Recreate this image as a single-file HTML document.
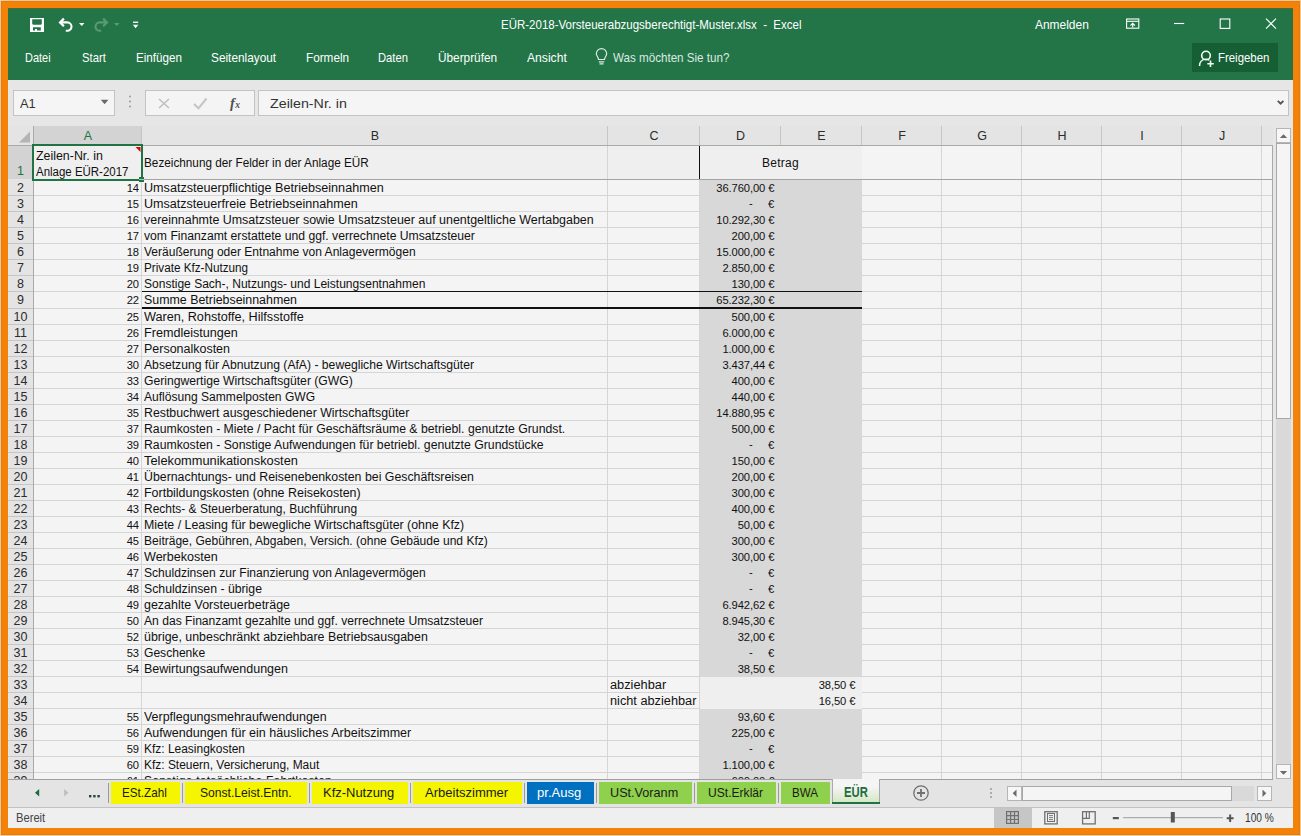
<!DOCTYPE html><html><head><meta charset="utf-8"><style>
*{margin:0;padding:0;box-sizing:border-box}
html,body{width:1301px;height:836px;overflow:hidden;background:#f58208;font-family:"Liberation Sans",sans-serif;position:relative}
.a{position:absolute}
.t{position:absolute;white-space:pre;line-height:1}
svg{position:absolute;overflow:visible}
</style></head><body><div class="a" style="left:0px;top:0px;width:1301px;height:836px;background:#fbc98e;"></div>
<div class="a" style="left:1px;top:1px;width:1299px;height:834px;background:#f58208;border:1px solid #de7c18"></div>
<div class="a" style="left:8px;top:8px;width:1285px;height:820px;background:#e6e6e6;"></div>
<div class="a" style="left:8px;top:8px;width:1285px;height:72px;background:#237548;"></div>
<div class="a" style="left:8px;top:8px;width:1285px;height:1px;background:#4d6b34;"></div>
<div class="t" style="left:500.50px;top:18.30px;font-size:13px;color:#ffffff;font-weight:normal;transform:scaleX(0.8849);transform-origin:0 0;">EÜR-2018-Vorsteuerabzugsberechtigt-Muster.xlsx  -  Excel</div>
<div class="t" style="left:1035.30px;top:17.50px;font-size:13px;color:#ffffff;font-weight:normal;transform:scaleX(0.9189);transform-origin:0 0;">Anmelden</div>
<div class="t" style="left:24.90px;top:51.20px;font-size:13px;color:#ffffff;font-weight:normal;transform:scaleX(0.8432);transform-origin:0 0;">Datei</div>
<div class="t" style="left:82.00px;top:51.20px;font-size:13px;color:#ffffff;font-weight:normal;transform:scaleX(0.8664);transform-origin:0 0;">Start</div>
<div class="t" style="left:135.50px;top:51.20px;font-size:13px;color:#ffffff;font-weight:normal;transform:scaleX(0.8962);transform-origin:0 0;">Einfügen</div>
<div class="t" style="left:211.00px;top:51.20px;font-size:13px;color:#ffffff;font-weight:normal;transform:scaleX(0.9097);transform-origin:0 0;">Seitenlayout</div>
<div class="t" style="left:305.70px;top:51.20px;font-size:13px;color:#ffffff;font-weight:normal;transform:scaleX(0.9038);transform-origin:0 0;">Formeln</div>
<div class="t" style="left:378.40px;top:51.20px;font-size:13px;color:#ffffff;font-weight:normal;transform:scaleX(0.8616);transform-origin:0 0;">Daten</div>
<div class="t" style="left:438.40px;top:51.20px;font-size:13px;color:#ffffff;font-weight:normal;transform:scaleX(0.9086);transform-origin:0 0;">Überprüfen</div>
<div class="t" style="left:527.00px;top:51.20px;font-size:13px;color:#ffffff;font-weight:normal;transform:scaleX(0.9334);transform-origin:0 0;">Ansicht</div>
<div class="t" style="left:613.00px;top:51.20px;font-size:13px;color:#dde9e1;font-weight:normal;transform:scaleX(0.8932);transform-origin:0 0;">Was möchten Sie tun?</div>
<svg style="left:0;top:0" width="1301" height="100"><g fill="none" stroke="#dde9e1" stroke-width="1.2"><path d="M598.5 59.5 C598.5 57 596.3 56 596.3 53.8 A5.2 5.2 0 0 1 606.7 53.8 C606.7 56 604.5 57 604.5 59.5 Z"/><path d="M598.8 61.8 H604.2 M599.5 63.8 H603.5"/></g></svg>
<div class="a" style="left:1192px;top:43px;width:86px;height:29px;background:#165f34;"></div>
<div class="t" style="left:1218.30px;top:51.20px;font-size:13px;color:#ffffff;font-weight:normal;transform:scaleX(0.8779);transform-origin:0 0;">Freigeben</div>
<svg style="left:0;top:0" width="1301" height="100"><g fill="none" stroke="#f2fff5" stroke-width="1.6"><circle cx="1206" cy="55.5" r="4.3"/><path d="M1199.5 66 C1199.5 61.5 1202.5 59.3 1206 59.3 C1207.3 59.3 1208.3 59.6 1209.3 60.1"/><path d="M1210.5 60.5 V67 M1207.3 63.7 H1213.8"/></g></svg>
<svg style="left:0;top:0" width="1301" height="100"><rect x="30" y="18" width="14" height="14" fill="#fff"/><path d="M32.2 19.2 H41.8 V24 L40.8 24.8 H33.2 L32.2 24 Z" fill="#237548"/><path d="M33 27.2 H40.8 V30.6 H37 V29 H35 V30.6 H33 Z" fill="#237548"/><path d="M61 22.4 H67.3 A4.2 4.2 0 0 1 67.3 30.8 H65.8" fill="none" stroke="#fff" stroke-width="2.1"/><path d="M63.9 18.6 L60.1 22.4 L63.9 26.2" fill="none" stroke="#fff" stroke-width="2.3"/><path d="M79 23 H84.5 L81.75 26 Z" fill="#fff"/><path d="M106 22.4 H99.7 A4.2 4.2 0 0 0 99.7 30.8 H101.2" fill="none" stroke="#5a9a72" stroke-width="2.1"/><path d="M103.1 18.6 L106.9 22.4 L103.1 26.2" fill="none" stroke="#5a9a72" stroke-width="2.3"/><path d="M114 23 H119.5 L116.75 26 Z" fill="#5d9a74"/><rect x="133" y="21.6" width="5.2" height="1.3" fill="#fff"/><path d="M132.8 24.8 H138.4 L135.6 28.3 Z" fill="#fff"/><rect x="1126.6" y="19" width="12.2" height="9.2" fill="none" stroke="#fff" stroke-width="1.1"/><path d="M1126.6 21.3 H1138.8" stroke="#fff" stroke-width="1.1"/><path d="M1132.7 27.5 V23.5 M1130.5 25.5 L1132.7 23.3 L1134.9 25.5" fill="none" stroke="#fff" stroke-width="1.1"/><path d="M1174 23.5 H1184.2" stroke="#fff" stroke-width="1.1"/><rect x="1220.2" y="19" width="9.6" height="9.4" fill="none" stroke="#fff" stroke-width="1.1"/><path d="M1266 18.6 L1276 28.6 M1276 18.6 L1266 28.6" stroke="#fff" stroke-width="1.1"/></svg>
<div class="a" style="left:8px;top:80px;width:1285px;height:46px;background:#e6e6e6;"></div>
<div class="a" style="left:13px;top:90px;width:102px;height:26px;background:#f5f5f5;border:1px solid #c3c3c3"></div>
<div class="t" style="left:20.10px;top:97.00px;font-size:13px;color:#333;font-weight:normal;transform:scaleX(0.9870);transform-origin:0 0;">A1</div>
<div class="a" style="left:145px;top:90px;width:110px;height:26px;background:#f4f4f4;border:1px solid #c3c3c3"></div>
<svg style="left:0;top:0" width="1301" height="130"><path d="M100.8 99.8 H108.4 L104.6 104.2 Z" fill="#6a6a6a"/><circle cx="130" cy="96.5" r="1" fill="#9a9a9a"/><circle cx="130" cy="101.5" r="1" fill="#9a9a9a"/><circle cx="130" cy="106.5" r="1" fill="#9a9a9a"/><path d="M159 99 L169 108 M169 99 L159 108" stroke="#bdbdbd" stroke-width="1.4"/><path d="M194 104 L198.5 108.3 L206.5 98.5" fill="none" stroke="#c4c4c4" stroke-width="2"/></svg>
<svg style="left:0;top:0" width="1301" height="130"><text x="230" y="107.8" font-family="Liberation Serif" font-style="italic" font-weight="bold" font-size="14.5" fill="#505050">f</text><text x="235.3" y="107.5" font-family="Liberation Serif" font-style="italic" font-weight="bold" font-size="9.5" fill="#505050">x</text></svg>
<div class="a" style="left:258px;top:90px;width:1031px;height:26px;background:#f5f5f5;border:1px solid #c3c3c3"></div>
<div class="t" style="left:270.20px;top:96.57px;font-size:13.5px;color:#333;font-weight:normal;transform:scaleX(1.0566);transform-origin:0 0;">Zeilen-Nr. in</div>
<svg style="left:0;top:0" width="1301" height="130"><path d="M1277.8 100.8 L1280.6 103.6 L1283.4 100.8" fill="none" stroke="#555" stroke-width="1.9"/></svg>
<div class="a" style="left:8px;top:126px;width:1265px;height:19px;background:#e4e4e4;"></div>
<div class="a" style="left:34px;top:126px;width:107px;height:19px;background:#d3d3d3;"></div>
<div class="t" style="left:83.83px;top:129.92px;font-size:12.5px;color:#217346;font-weight:normal;">A</div>
<div class="a" style="left:141px;top:126px;width:1px;height:19px;background:#c6c6c6;"></div>
<div class="t" style="left:370.83px;top:129.92px;font-size:12.5px;color:#2b2b2b;font-weight:normal;">B</div>
<div class="a" style="left:607px;top:126px;width:1px;height:19px;background:#c6c6c6;"></div>
<div class="t" style="left:649.48px;top:129.92px;font-size:12.5px;color:#2b2b2b;font-weight:normal;">C</div>
<div class="a" style="left:699px;top:126px;width:1px;height:19px;background:#c6c6c6;"></div>
<div class="t" style="left:735.98px;top:129.92px;font-size:12.5px;color:#2b2b2b;font-weight:normal;">D</div>
<div class="a" style="left:780px;top:126px;width:1px;height:19px;background:#c6c6c6;"></div>
<div class="t" style="left:817.33px;top:129.92px;font-size:12.5px;color:#2b2b2b;font-weight:normal;">E</div>
<div class="a" style="left:861px;top:126px;width:1px;height:19px;background:#c6c6c6;"></div>
<div class="t" style="left:898.18px;top:129.92px;font-size:12.5px;color:#2b2b2b;font-weight:normal;">F</div>
<div class="a" style="left:941px;top:126px;width:1px;height:19px;background:#c6c6c6;"></div>
<div class="t" style="left:977.13px;top:129.92px;font-size:12.5px;color:#2b2b2b;font-weight:normal;">G</div>
<div class="a" style="left:1021px;top:126px;width:1px;height:19px;background:#c6c6c6;"></div>
<div class="t" style="left:1057.48px;top:129.92px;font-size:12.5px;color:#2b2b2b;font-weight:normal;">H</div>
<div class="a" style="left:1101px;top:126px;width:1px;height:19px;background:#c6c6c6;"></div>
<div class="t" style="left:1140.26px;top:129.92px;font-size:12.5px;color:#2b2b2b;font-weight:normal;">I</div>
<div class="a" style="left:1181px;top:126px;width:1px;height:19px;background:#c6c6c6;"></div>
<div class="t" style="left:1218.88px;top:129.92px;font-size:12.5px;color:#2b2b2b;font-weight:normal;">J</div>
<div class="a" style="left:1261px;top:126px;width:1px;height:19px;background:#c6c6c6;"></div>
<svg style="left:0;top:0" width="60" height="150"><path d="M30 131.5 V142.5 H19 Z" fill="#b4b4b4"/></svg>
<div class="a" style="left:34px;top:146px;width:1238px;height:633px;background:#f4f4f4;"></div>
<div class="a" style="left:141px;top:146px;width:1px;height:633px;background:#d5d5d5;"></div>
<div class="a" style="left:607px;top:146px;width:1px;height:633px;background:#d5d5d5;"></div>
<div class="a" style="left:699px;top:146px;width:1px;height:633px;background:#d5d5d5;"></div>
<div class="a" style="left:780px;top:146px;width:1px;height:633px;background:#d5d5d5;"></div>
<div class="a" style="left:861px;top:146px;width:1px;height:633px;background:#d5d5d5;"></div>
<div class="a" style="left:941px;top:146px;width:1px;height:633px;background:#d5d5d5;"></div>
<div class="a" style="left:1021px;top:146px;width:1px;height:633px;background:#d5d5d5;"></div>
<div class="a" style="left:1101px;top:146px;width:1px;height:633px;background:#d5d5d5;"></div>
<div class="a" style="left:1181px;top:146px;width:1px;height:633px;background:#d5d5d5;"></div>
<div class="a" style="left:1261px;top:146px;width:1px;height:633px;background:#d5d5d5;"></div>
<div class="a" style="left:34px;top:195px;width:1238px;height:1px;background:#d5d5d5;"></div>
<div class="a" style="left:34px;top:211px;width:1238px;height:1px;background:#d5d5d5;"></div>
<div class="a" style="left:34px;top:227px;width:1238px;height:1px;background:#d5d5d5;"></div>
<div class="a" style="left:34px;top:243px;width:1238px;height:1px;background:#d5d5d5;"></div>
<div class="a" style="left:34px;top:259px;width:1238px;height:1px;background:#d5d5d5;"></div>
<div class="a" style="left:34px;top:275px;width:1238px;height:1px;background:#d5d5d5;"></div>
<div class="a" style="left:34px;top:291px;width:1238px;height:1px;background:#d5d5d5;"></div>
<div class="a" style="left:34px;top:308px;width:1238px;height:1px;background:#d5d5d5;"></div>
<div class="a" style="left:34px;top:324px;width:1238px;height:1px;background:#d5d5d5;"></div>
<div class="a" style="left:34px;top:340px;width:1238px;height:1px;background:#d5d5d5;"></div>
<div class="a" style="left:34px;top:356px;width:1238px;height:1px;background:#d5d5d5;"></div>
<div class="a" style="left:34px;top:372px;width:1238px;height:1px;background:#d5d5d5;"></div>
<div class="a" style="left:34px;top:388px;width:1238px;height:1px;background:#d5d5d5;"></div>
<div class="a" style="left:34px;top:404px;width:1238px;height:1px;background:#d5d5d5;"></div>
<div class="a" style="left:34px;top:420px;width:1238px;height:1px;background:#d5d5d5;"></div>
<div class="a" style="left:34px;top:436px;width:1238px;height:1px;background:#d5d5d5;"></div>
<div class="a" style="left:34px;top:452px;width:1238px;height:1px;background:#d5d5d5;"></div>
<div class="a" style="left:34px;top:468px;width:1238px;height:1px;background:#d5d5d5;"></div>
<div class="a" style="left:34px;top:484px;width:1238px;height:1px;background:#d5d5d5;"></div>
<div class="a" style="left:34px;top:500px;width:1238px;height:1px;background:#d5d5d5;"></div>
<div class="a" style="left:34px;top:516px;width:1238px;height:1px;background:#d5d5d5;"></div>
<div class="a" style="left:34px;top:532px;width:1238px;height:1px;background:#d5d5d5;"></div>
<div class="a" style="left:34px;top:548px;width:1238px;height:1px;background:#d5d5d5;"></div>
<div class="a" style="left:34px;top:564px;width:1238px;height:1px;background:#d5d5d5;"></div>
<div class="a" style="left:34px;top:580px;width:1238px;height:1px;background:#d5d5d5;"></div>
<div class="a" style="left:34px;top:596px;width:1238px;height:1px;background:#d5d5d5;"></div>
<div class="a" style="left:34px;top:612px;width:1238px;height:1px;background:#d5d5d5;"></div>
<div class="a" style="left:34px;top:628px;width:1238px;height:1px;background:#d5d5d5;"></div>
<div class="a" style="left:34px;top:644px;width:1238px;height:1px;background:#d5d5d5;"></div>
<div class="a" style="left:34px;top:660px;width:1238px;height:1px;background:#d5d5d5;"></div>
<div class="a" style="left:34px;top:676px;width:1238px;height:1px;background:#d5d5d5;"></div>
<div class="a" style="left:34px;top:692px;width:1238px;height:1px;background:#d5d5d5;"></div>
<div class="a" style="left:34px;top:708px;width:1238px;height:1px;background:#d5d5d5;"></div>
<div class="a" style="left:34px;top:724px;width:1238px;height:1px;background:#d5d5d5;"></div>
<div class="a" style="left:34px;top:740px;width:1238px;height:1px;background:#d5d5d5;"></div>
<div class="a" style="left:34px;top:756px;width:1238px;height:1px;background:#d5d5d5;"></div>
<div class="a" style="left:34px;top:772px;width:1238px;height:1px;background:#d5d5d5;"></div>
<div class="a" style="left:34px;top:146px;width:828px;height:33px;background:#efefef;"></div>
<div class="a" style="left:141px;top:146px;width:1px;height:33px;background:#d5d5d5;"></div>
<div class="a" style="left:607px;top:146px;width:1px;height:33px;background:#d5d5d5;"></div>
<div class="a" style="left:699px;top:146px;width:1px;height:33px;background:#111;"></div>
<div class="a" style="left:700px;top:180px;width:162px;height:16px;background:#d8d8d8;"></div>
<div class="a" style="left:700px;top:196px;width:162px;height:16px;background:#d8d8d8;"></div>
<div class="a" style="left:700px;top:212px;width:162px;height:16px;background:#d8d8d8;"></div>
<div class="a" style="left:700px;top:228px;width:162px;height:16px;background:#d8d8d8;"></div>
<div class="a" style="left:700px;top:244px;width:162px;height:16px;background:#d8d8d8;"></div>
<div class="a" style="left:700px;top:260px;width:162px;height:16px;background:#d8d8d8;"></div>
<div class="a" style="left:700px;top:276px;width:162px;height:16px;background:#d8d8d8;"></div>
<div class="a" style="left:700px;top:292px;width:162px;height:17px;background:#d8d8d8;"></div>
<div class="a" style="left:700px;top:309px;width:162px;height:16px;background:#d8d8d8;"></div>
<div class="a" style="left:700px;top:325px;width:162px;height:16px;background:#d8d8d8;"></div>
<div class="a" style="left:700px;top:341px;width:162px;height:16px;background:#d8d8d8;"></div>
<div class="a" style="left:700px;top:357px;width:162px;height:16px;background:#d8d8d8;"></div>
<div class="a" style="left:700px;top:373px;width:162px;height:16px;background:#d8d8d8;"></div>
<div class="a" style="left:700px;top:389px;width:162px;height:16px;background:#d8d8d8;"></div>
<div class="a" style="left:700px;top:405px;width:162px;height:16px;background:#d8d8d8;"></div>
<div class="a" style="left:700px;top:421px;width:162px;height:16px;background:#d8d8d8;"></div>
<div class="a" style="left:700px;top:437px;width:162px;height:16px;background:#d8d8d8;"></div>
<div class="a" style="left:700px;top:453px;width:162px;height:16px;background:#d8d8d8;"></div>
<div class="a" style="left:700px;top:469px;width:162px;height:16px;background:#d8d8d8;"></div>
<div class="a" style="left:700px;top:485px;width:162px;height:16px;background:#d8d8d8;"></div>
<div class="a" style="left:700px;top:501px;width:162px;height:16px;background:#d8d8d8;"></div>
<div class="a" style="left:700px;top:517px;width:162px;height:16px;background:#d8d8d8;"></div>
<div class="a" style="left:700px;top:533px;width:162px;height:16px;background:#d8d8d8;"></div>
<div class="a" style="left:700px;top:549px;width:162px;height:16px;background:#d8d8d8;"></div>
<div class="a" style="left:700px;top:565px;width:162px;height:16px;background:#d8d8d8;"></div>
<div class="a" style="left:700px;top:581px;width:162px;height:16px;background:#d8d8d8;"></div>
<div class="a" style="left:700px;top:597px;width:162px;height:16px;background:#d8d8d8;"></div>
<div class="a" style="left:700px;top:613px;width:162px;height:16px;background:#d8d8d8;"></div>
<div class="a" style="left:700px;top:629px;width:162px;height:16px;background:#d8d8d8;"></div>
<div class="a" style="left:700px;top:645px;width:162px;height:16px;background:#d8d8d8;"></div>
<div class="a" style="left:700px;top:661px;width:162px;height:16px;background:#d8d8d8;"></div>
<div class="a" style="left:700px;top:677px;width:162px;height:16px;background:#efefef;"></div>
<div class="a" style="left:700px;top:693px;width:162px;height:16px;background:#efefef;"></div>
<div class="a" style="left:700px;top:709px;width:162px;height:16px;background:#d8d8d8;"></div>
<div class="a" style="left:700px;top:725px;width:162px;height:16px;background:#d8d8d8;"></div>
<div class="a" style="left:700px;top:741px;width:162px;height:16px;background:#d8d8d8;"></div>
<div class="a" style="left:700px;top:757px;width:162px;height:16px;background:#d8d8d8;"></div>
<div class="a" style="left:700px;top:773px;width:162px;height:16px;background:#d8d8d8;"></div>
<div class="a" style="left:8px;top:179px;width:1264px;height:1px;background:#a3a3a3;"></div>
<div class="a" style="left:8px;top:145px;width:1265px;height:1px;background:#a9a9a9;"></div>
<div class="a" style="left:142px;top:291px;width:720px;height:1px;background:#111;"></div>
<div class="a" style="left:142px;top:307px;width:720px;height:2px;background:#111;"></div>
<div class="a" style="left:8px;top:146px;width:25px;height:633px;background:#e4e4e4;"></div>
<div class="a" style="left:8px;top:146px;width:25px;height:33px;background:#d3d3d3;"></div>
<div class="t" style="left:17.02px;top:165.42px;font-size:12.5px;color:#217346;font-weight:normal;">1</div>
<div class="a" style="left:8px;top:195px;width:25px;height:1px;background:#c6c6c6;"></div>
<div class="t" style="left:17.02px;top:181.62px;font-size:12.5px;color:#2b2b2b;font-weight:normal;">2</div>
<div class="a" style="left:8px;top:211px;width:25px;height:1px;background:#c6c6c6;"></div>
<div class="t" style="left:17.02px;top:197.62px;font-size:12.5px;color:#2b2b2b;font-weight:normal;">3</div>
<div class="a" style="left:8px;top:227px;width:25px;height:1px;background:#c6c6c6;"></div>
<div class="t" style="left:17.02px;top:213.62px;font-size:12.5px;color:#2b2b2b;font-weight:normal;">4</div>
<div class="a" style="left:8px;top:243px;width:25px;height:1px;background:#c6c6c6;"></div>
<div class="t" style="left:17.02px;top:229.62px;font-size:12.5px;color:#2b2b2b;font-weight:normal;">5</div>
<div class="a" style="left:8px;top:259px;width:25px;height:1px;background:#c6c6c6;"></div>
<div class="t" style="left:17.02px;top:245.62px;font-size:12.5px;color:#2b2b2b;font-weight:normal;">6</div>
<div class="a" style="left:8px;top:275px;width:25px;height:1px;background:#c6c6c6;"></div>
<div class="t" style="left:17.02px;top:261.62px;font-size:12.5px;color:#2b2b2b;font-weight:normal;">7</div>
<div class="a" style="left:8px;top:291px;width:25px;height:1px;background:#c6c6c6;"></div>
<div class="t" style="left:17.02px;top:277.62px;font-size:12.5px;color:#2b2b2b;font-weight:normal;">8</div>
<div class="a" style="left:8px;top:308px;width:25px;height:1px;background:#c6c6c6;"></div>
<div class="t" style="left:17.02px;top:293.62px;font-size:12.5px;color:#2b2b2b;font-weight:normal;">9</div>
<div class="a" style="left:8px;top:324px;width:25px;height:1px;background:#c6c6c6;"></div>
<div class="t" style="left:13.55px;top:310.62px;font-size:12.5px;color:#2b2b2b;font-weight:normal;">10</div>
<div class="a" style="left:8px;top:340px;width:25px;height:1px;background:#c6c6c6;"></div>
<div class="t" style="left:14.01px;top:326.62px;font-size:12.5px;color:#2b2b2b;font-weight:normal;">11</div>
<div class="a" style="left:8px;top:356px;width:25px;height:1px;background:#c6c6c6;"></div>
<div class="t" style="left:13.55px;top:342.62px;font-size:12.5px;color:#2b2b2b;font-weight:normal;">12</div>
<div class="a" style="left:8px;top:372px;width:25px;height:1px;background:#c6c6c6;"></div>
<div class="t" style="left:13.55px;top:358.62px;font-size:12.5px;color:#2b2b2b;font-weight:normal;">13</div>
<div class="a" style="left:8px;top:388px;width:25px;height:1px;background:#c6c6c6;"></div>
<div class="t" style="left:13.55px;top:374.62px;font-size:12.5px;color:#2b2b2b;font-weight:normal;">14</div>
<div class="a" style="left:8px;top:404px;width:25px;height:1px;background:#c6c6c6;"></div>
<div class="t" style="left:13.55px;top:390.62px;font-size:12.5px;color:#2b2b2b;font-weight:normal;">15</div>
<div class="a" style="left:8px;top:420px;width:25px;height:1px;background:#c6c6c6;"></div>
<div class="t" style="left:13.55px;top:406.62px;font-size:12.5px;color:#2b2b2b;font-weight:normal;">16</div>
<div class="a" style="left:8px;top:436px;width:25px;height:1px;background:#c6c6c6;"></div>
<div class="t" style="left:13.55px;top:422.62px;font-size:12.5px;color:#2b2b2b;font-weight:normal;">17</div>
<div class="a" style="left:8px;top:452px;width:25px;height:1px;background:#c6c6c6;"></div>
<div class="t" style="left:13.55px;top:438.62px;font-size:12.5px;color:#2b2b2b;font-weight:normal;">18</div>
<div class="a" style="left:8px;top:468px;width:25px;height:1px;background:#c6c6c6;"></div>
<div class="t" style="left:13.55px;top:454.62px;font-size:12.5px;color:#2b2b2b;font-weight:normal;">19</div>
<div class="a" style="left:8px;top:484px;width:25px;height:1px;background:#c6c6c6;"></div>
<div class="t" style="left:13.55px;top:470.62px;font-size:12.5px;color:#2b2b2b;font-weight:normal;">20</div>
<div class="a" style="left:8px;top:500px;width:25px;height:1px;background:#c6c6c6;"></div>
<div class="t" style="left:13.55px;top:486.62px;font-size:12.5px;color:#2b2b2b;font-weight:normal;">21</div>
<div class="a" style="left:8px;top:516px;width:25px;height:1px;background:#c6c6c6;"></div>
<div class="t" style="left:13.55px;top:502.62px;font-size:12.5px;color:#2b2b2b;font-weight:normal;">22</div>
<div class="a" style="left:8px;top:532px;width:25px;height:1px;background:#c6c6c6;"></div>
<div class="t" style="left:13.55px;top:518.62px;font-size:12.5px;color:#2b2b2b;font-weight:normal;">23</div>
<div class="a" style="left:8px;top:548px;width:25px;height:1px;background:#c6c6c6;"></div>
<div class="t" style="left:13.55px;top:534.62px;font-size:12.5px;color:#2b2b2b;font-weight:normal;">24</div>
<div class="a" style="left:8px;top:564px;width:25px;height:1px;background:#c6c6c6;"></div>
<div class="t" style="left:13.55px;top:550.62px;font-size:12.5px;color:#2b2b2b;font-weight:normal;">25</div>
<div class="a" style="left:8px;top:580px;width:25px;height:1px;background:#c6c6c6;"></div>
<div class="t" style="left:13.55px;top:566.62px;font-size:12.5px;color:#2b2b2b;font-weight:normal;">26</div>
<div class="a" style="left:8px;top:596px;width:25px;height:1px;background:#c6c6c6;"></div>
<div class="t" style="left:13.55px;top:582.62px;font-size:12.5px;color:#2b2b2b;font-weight:normal;">27</div>
<div class="a" style="left:8px;top:612px;width:25px;height:1px;background:#c6c6c6;"></div>
<div class="t" style="left:13.55px;top:598.62px;font-size:12.5px;color:#2b2b2b;font-weight:normal;">28</div>
<div class="a" style="left:8px;top:628px;width:25px;height:1px;background:#c6c6c6;"></div>
<div class="t" style="left:13.55px;top:614.62px;font-size:12.5px;color:#2b2b2b;font-weight:normal;">29</div>
<div class="a" style="left:8px;top:644px;width:25px;height:1px;background:#c6c6c6;"></div>
<div class="t" style="left:13.55px;top:630.62px;font-size:12.5px;color:#2b2b2b;font-weight:normal;">30</div>
<div class="a" style="left:8px;top:660px;width:25px;height:1px;background:#c6c6c6;"></div>
<div class="t" style="left:13.55px;top:646.62px;font-size:12.5px;color:#2b2b2b;font-weight:normal;">31</div>
<div class="a" style="left:8px;top:676px;width:25px;height:1px;background:#c6c6c6;"></div>
<div class="t" style="left:13.55px;top:662.62px;font-size:12.5px;color:#2b2b2b;font-weight:normal;">32</div>
<div class="a" style="left:8px;top:692px;width:25px;height:1px;background:#c6c6c6;"></div>
<div class="t" style="left:13.55px;top:678.62px;font-size:12.5px;color:#2b2b2b;font-weight:normal;">33</div>
<div class="a" style="left:8px;top:708px;width:25px;height:1px;background:#c6c6c6;"></div>
<div class="t" style="left:13.55px;top:694.62px;font-size:12.5px;color:#2b2b2b;font-weight:normal;">34</div>
<div class="a" style="left:8px;top:724px;width:25px;height:1px;background:#c6c6c6;"></div>
<div class="t" style="left:13.55px;top:710.62px;font-size:12.5px;color:#2b2b2b;font-weight:normal;">35</div>
<div class="a" style="left:8px;top:740px;width:25px;height:1px;background:#c6c6c6;"></div>
<div class="t" style="left:13.55px;top:726.62px;font-size:12.5px;color:#2b2b2b;font-weight:normal;">36</div>
<div class="a" style="left:8px;top:756px;width:25px;height:1px;background:#c6c6c6;"></div>
<div class="t" style="left:13.55px;top:742.62px;font-size:12.5px;color:#2b2b2b;font-weight:normal;">37</div>
<div class="a" style="left:8px;top:772px;width:25px;height:1px;background:#c6c6c6;"></div>
<div class="t" style="left:13.55px;top:758.62px;font-size:12.5px;color:#2b2b2b;font-weight:normal;">38</div>
<div class="a" style="left:8px;top:788px;width:25px;height:1px;background:#c6c6c6;"></div>
<div class="t" style="left:13.55px;top:774.62px;font-size:12.5px;color:#2b2b2b;font-weight:normal;">39</div>
<div class="a" style="left:33px;top:126px;width:1px;height:653px;background:#a9a9a9;"></div>
<div class="t" style="left:36.00px;top:149.54px;font-size:12px;color:#111;font-weight:normal;transform:scaleX(1.0327);transform-origin:0 0;">Zeilen-Nr. in</div>
<div class="t" style="left:36.00px;top:165.54px;font-size:12px;color:#111;font-weight:normal;transform:scaleX(0.9552);transform-origin:0 0;">Anlage EÜR-2017</div>
<div class="t" style="left:144.00px;top:157.04px;font-size:12px;color:#111;font-weight:normal;transform:scaleX(0.9796);transform-origin:0 0;">Bezeichnung der Felder in der Anlage EÜR</div>
<div class="t" style="left:762.10px;top:157.04px;font-size:12px;color:#111;font-weight:normal;letter-spacing:0.24px;">Betrag</div>
<div class="t" style="left:126.75px;top:182.72px;font-size:11.2px;color:#111;font-weight:normal;letter-spacing:-0.1px;">14</div>
<div class="t" style="left:144.00px;top:182.04px;font-size:12px;color:#111;font-weight:normal;transform:scaleX(1.0507);transform-origin:0 0;">Umsatzsteuerpflichtige Betriebseinnahmen</div>
<div class="t" style="left:716.29px;top:182.72px;font-size:11.2px;color:#111;font-weight:normal;letter-spacing:-0.1px;">36.760,00 €</div>
<div class="t" style="left:126.75px;top:198.72px;font-size:11.2px;color:#111;font-weight:normal;letter-spacing:-0.1px;">15</div>
<div class="t" style="left:144.00px;top:198.04px;font-size:12px;color:#111;font-weight:normal;transform:scaleX(1.0470);transform-origin:0 0;">Umsatzsteuerfreie Betriebseinnahmen</div>
<div class="t" style="left:749.00px;top:197.72px;font-size:11.2px;color:#111;font-weight:normal;">-</div>
<div class="t" style="left:768.07px;top:198.72px;font-size:11.2px;color:#111;font-weight:normal;">€</div>
<div class="t" style="left:126.75px;top:214.72px;font-size:11.2px;color:#111;font-weight:normal;letter-spacing:-0.1px;">16</div>
<div class="t" style="left:144.00px;top:214.04px;font-size:12px;color:#111;font-weight:normal;transform:scaleX(1.0361);transform-origin:0 0;">vereinnahmte Umsatzsteuer sowie Umsatzsteuer auf unentgeltliche Wertabgaben</div>
<div class="t" style="left:716.29px;top:214.72px;font-size:11.2px;color:#111;font-weight:normal;letter-spacing:-0.1px;">10.292,30 €</div>
<div class="t" style="left:126.75px;top:230.72px;font-size:11.2px;color:#111;font-weight:normal;letter-spacing:-0.1px;">17</div>
<div class="t" style="left:144.00px;top:230.04px;font-size:12px;color:#111;font-weight:normal;transform:scaleX(1.0145);transform-origin:0 0;">vom Finanzamt erstattete und ggf. verrechnete Umsatzsteuer</div>
<div class="t" style="left:731.54px;top:230.72px;font-size:11.2px;color:#111;font-weight:normal;letter-spacing:-0.1px;">200,00 €</div>
<div class="t" style="left:126.75px;top:246.72px;font-size:11.2px;color:#111;font-weight:normal;letter-spacing:-0.1px;">18</div>
<div class="t" style="left:144.00px;top:246.04px;font-size:12px;color:#111;font-weight:normal;transform:scaleX(1.0027);transform-origin:0 0;">Veräußerung oder Entnahme von Anlagevermögen</div>
<div class="t" style="left:716.29px;top:246.72px;font-size:11.2px;color:#111;font-weight:normal;letter-spacing:-0.1px;">15.000,00 €</div>
<div class="t" style="left:126.75px;top:262.72px;font-size:11.2px;color:#111;font-weight:normal;letter-spacing:-0.1px;">19</div>
<div class="t" style="left:144.00px;top:262.04px;font-size:12px;color:#111;font-weight:normal;transform:scaleX(0.9755);transform-origin:0 0;">Private Kfz-Nutzung</div>
<div class="t" style="left:722.41px;top:262.72px;font-size:11.2px;color:#111;font-weight:normal;letter-spacing:-0.1px;">2.850,00 €</div>
<div class="t" style="left:126.75px;top:278.72px;font-size:11.2px;color:#111;font-weight:normal;letter-spacing:-0.1px;">20</div>
<div class="t" style="left:144.00px;top:278.04px;font-size:12px;color:#111;font-weight:normal;transform:scaleX(1.0019);transform-origin:0 0;">Sonstige Sach-, Nutzungs- und Leistungsentnahmen</div>
<div class="t" style="left:731.54px;top:278.72px;font-size:11.2px;color:#111;font-weight:normal;letter-spacing:-0.1px;">130,00 €</div>
<div class="t" style="left:126.75px;top:294.72px;font-size:11.2px;color:#111;font-weight:normal;letter-spacing:-0.1px;">22</div>
<div class="t" style="left:144.00px;top:294.04px;font-size:12px;color:#111;font-weight:normal;transform:scaleX(1.0332);transform-origin:0 0;">Summe Betriebseinnahmen</div>
<div class="t" style="left:716.29px;top:294.72px;font-size:11.2px;color:#111;font-weight:normal;letter-spacing:-0.1px;">65.232,30 €</div>
<div class="t" style="left:126.75px;top:311.72px;font-size:11.2px;color:#111;font-weight:normal;letter-spacing:-0.1px;">25</div>
<div class="t" style="left:144.00px;top:311.04px;font-size:12px;color:#111;font-weight:normal;transform:scaleX(1.0523);transform-origin:0 0;">Waren, Rohstoffe, Hilfsstoffe</div>
<div class="t" style="left:731.54px;top:311.72px;font-size:11.2px;color:#111;font-weight:normal;letter-spacing:-0.1px;">500,00 €</div>
<div class="t" style="left:126.75px;top:327.72px;font-size:11.2px;color:#111;font-weight:normal;letter-spacing:-0.1px;">26</div>
<div class="t" style="left:144.00px;top:327.04px;font-size:12px;color:#111;font-weight:normal;transform:scaleX(1.0504);transform-origin:0 0;">Fremdleistungen</div>
<div class="t" style="left:722.41px;top:327.72px;font-size:11.2px;color:#111;font-weight:normal;letter-spacing:-0.1px;">6.000,00 €</div>
<div class="t" style="left:126.75px;top:343.72px;font-size:11.2px;color:#111;font-weight:normal;letter-spacing:-0.1px;">27</div>
<div class="t" style="left:144.00px;top:343.04px;font-size:12px;color:#111;font-weight:normal;transform:scaleX(1.0397);transform-origin:0 0;">Personalkosten</div>
<div class="t" style="left:722.41px;top:343.72px;font-size:11.2px;color:#111;font-weight:normal;letter-spacing:-0.1px;">1.000,00 €</div>
<div class="t" style="left:126.75px;top:359.72px;font-size:11.2px;color:#111;font-weight:normal;letter-spacing:-0.1px;">30</div>
<div class="t" style="left:144.00px;top:359.04px;font-size:12px;color:#111;font-weight:normal;transform:scaleX(1.0138);transform-origin:0 0;">Absetzung für Abnutzung (AfA) - bewegliche Wirtschaftsgüter</div>
<div class="t" style="left:722.41px;top:359.72px;font-size:11.2px;color:#111;font-weight:normal;letter-spacing:-0.1px;">3.437,44 €</div>
<div class="t" style="left:126.75px;top:375.72px;font-size:11.2px;color:#111;font-weight:normal;letter-spacing:-0.1px;">33</div>
<div class="t" style="left:144.00px;top:375.04px;font-size:12px;color:#111;font-weight:normal;transform:scaleX(1.0134);transform-origin:0 0;">Geringwertige Wirtschaftsgüter (GWG)</div>
<div class="t" style="left:731.54px;top:375.72px;font-size:11.2px;color:#111;font-weight:normal;letter-spacing:-0.1px;">400,00 €</div>
<div class="t" style="left:126.75px;top:391.72px;font-size:11.2px;color:#111;font-weight:normal;letter-spacing:-0.1px;">34</div>
<div class="t" style="left:144.00px;top:391.04px;font-size:12px;color:#111;font-weight:normal;transform:scaleX(1.0060);transform-origin:0 0;">Auflösung Sammelposten GWG</div>
<div class="t" style="left:731.54px;top:391.72px;font-size:11.2px;color:#111;font-weight:normal;letter-spacing:-0.1px;">440,00 €</div>
<div class="t" style="left:126.75px;top:407.72px;font-size:11.2px;color:#111;font-weight:normal;letter-spacing:-0.1px;">35</div>
<div class="t" style="left:144.00px;top:407.04px;font-size:12px;color:#111;font-weight:normal;transform:scaleX(1.0278);transform-origin:0 0;">Restbuchwert ausgeschiedener Wirtschaftsgüter</div>
<div class="t" style="left:716.29px;top:407.72px;font-size:11.2px;color:#111;font-weight:normal;letter-spacing:-0.1px;">14.880,95 €</div>
<div class="t" style="left:126.75px;top:423.72px;font-size:11.2px;color:#111;font-weight:normal;letter-spacing:-0.1px;">37</div>
<div class="t" style="left:144.00px;top:423.04px;font-size:12px;color:#111;font-weight:normal;transform:scaleX(1.0202);transform-origin:0 0;">Raumkosten - Miete / Pacht für Geschäftsräume &amp; betriebl. genutzte Grundst.</div>
<div class="t" style="left:731.54px;top:423.72px;font-size:11.2px;color:#111;font-weight:normal;letter-spacing:-0.1px;">500,00 €</div>
<div class="t" style="left:126.75px;top:439.72px;font-size:11.2px;color:#111;font-weight:normal;letter-spacing:-0.1px;">39</div>
<div class="t" style="left:144.00px;top:439.04px;font-size:12px;color:#111;font-weight:normal;transform:scaleX(1.0207);transform-origin:0 0;">Raumkosten - Sonstige Aufwendungen für betriebl. genutzte Grundstücke</div>
<div class="t" style="left:749.00px;top:438.72px;font-size:11.2px;color:#111;font-weight:normal;">-</div>
<div class="t" style="left:768.07px;top:439.72px;font-size:11.2px;color:#111;font-weight:normal;">€</div>
<div class="t" style="left:126.75px;top:455.72px;font-size:11.2px;color:#111;font-weight:normal;letter-spacing:-0.1px;">40</div>
<div class="t" style="left:144.00px;top:455.04px;font-size:12px;color:#111;font-weight:normal;transform:scaleX(1.0682);transform-origin:0 0;">Telekommunikationskosten</div>
<div class="t" style="left:731.54px;top:455.72px;font-size:11.2px;color:#111;font-weight:normal;letter-spacing:-0.1px;">150,00 €</div>
<div class="t" style="left:126.75px;top:471.72px;font-size:11.2px;color:#111;font-weight:normal;letter-spacing:-0.1px;">41</div>
<div class="t" style="left:144.00px;top:471.04px;font-size:12px;color:#111;font-weight:normal;transform:scaleX(1.0284);transform-origin:0 0;">Übernachtungs- und Reisenebenkosten bei Geschäftsreisen</div>
<div class="t" style="left:731.54px;top:471.72px;font-size:11.2px;color:#111;font-weight:normal;letter-spacing:-0.1px;">200,00 €</div>
<div class="t" style="left:126.75px;top:487.72px;font-size:11.2px;color:#111;font-weight:normal;letter-spacing:-0.1px;">42</div>
<div class="t" style="left:144.00px;top:487.04px;font-size:12px;color:#111;font-weight:normal;transform:scaleX(1.0379);transform-origin:0 0;">Fortbildungskosten (ohne Reisekosten)</div>
<div class="t" style="left:731.54px;top:487.72px;font-size:11.2px;color:#111;font-weight:normal;letter-spacing:-0.1px;">300,00 €</div>
<div class="t" style="left:126.75px;top:503.72px;font-size:11.2px;color:#111;font-weight:normal;letter-spacing:-0.1px;">43</div>
<div class="t" style="left:144.00px;top:503.04px;font-size:12px;color:#111;font-weight:normal;transform:scaleX(0.9983);transform-origin:0 0;">Rechts- &amp; Steuerberatung, Buchführung</div>
<div class="t" style="left:731.54px;top:503.72px;font-size:11.2px;color:#111;font-weight:normal;letter-spacing:-0.1px;">400,00 €</div>
<div class="t" style="left:126.75px;top:519.72px;font-size:11.2px;color:#111;font-weight:normal;letter-spacing:-0.1px;">44</div>
<div class="t" style="left:144.00px;top:519.04px;font-size:12px;color:#111;font-weight:normal;transform:scaleX(1.0299);transform-origin:0 0;">Miete / Leasing für bewegliche Wirtschaftsgüter (ohne Kfz)</div>
<div class="t" style="left:737.67px;top:519.72px;font-size:11.2px;color:#111;font-weight:normal;letter-spacing:-0.1px;">50,00 €</div>
<div class="t" style="left:126.75px;top:535.72px;font-size:11.2px;color:#111;font-weight:normal;letter-spacing:-0.1px;">45</div>
<div class="t" style="left:144.00px;top:535.04px;font-size:12px;color:#111;font-weight:normal;transform:scaleX(1.0026);transform-origin:0 0;">Beiträge, Gebühren, Abgaben, Versich. (ohne Gebäude und Kfz)</div>
<div class="t" style="left:731.54px;top:535.72px;font-size:11.2px;color:#111;font-weight:normal;letter-spacing:-0.1px;">300,00 €</div>
<div class="t" style="left:126.75px;top:551.72px;font-size:11.2px;color:#111;font-weight:normal;letter-spacing:-0.1px;">46</div>
<div class="t" style="left:144.00px;top:551.04px;font-size:12px;color:#111;font-weight:normal;transform:scaleX(1.0470);transform-origin:0 0;">Werbekosten</div>
<div class="t" style="left:731.54px;top:551.72px;font-size:11.2px;color:#111;font-weight:normal;letter-spacing:-0.1px;">300,00 €</div>
<div class="t" style="left:126.75px;top:567.72px;font-size:11.2px;color:#111;font-weight:normal;letter-spacing:-0.1px;">47</div>
<div class="t" style="left:144.00px;top:567.04px;font-size:12px;color:#111;font-weight:normal;transform:scaleX(1.0058);transform-origin:0 0;">Schuldzinsen zur Finanzierung von Anlagevermögen</div>
<div class="t" style="left:749.00px;top:566.72px;font-size:11.2px;color:#111;font-weight:normal;">-</div>
<div class="t" style="left:768.07px;top:567.72px;font-size:11.2px;color:#111;font-weight:normal;">€</div>
<div class="t" style="left:126.75px;top:583.72px;font-size:11.2px;color:#111;font-weight:normal;letter-spacing:-0.1px;">48</div>
<div class="t" style="left:144.00px;top:583.04px;font-size:12px;color:#111;font-weight:normal;transform:scaleX(1.0225);transform-origin:0 0;">Schuldzinsen - übrige</div>
<div class="t" style="left:749.00px;top:582.72px;font-size:11.2px;color:#111;font-weight:normal;">-</div>
<div class="t" style="left:768.07px;top:583.72px;font-size:11.2px;color:#111;font-weight:normal;">€</div>
<div class="t" style="left:126.75px;top:599.72px;font-size:11.2px;color:#111;font-weight:normal;letter-spacing:-0.1px;">49</div>
<div class="t" style="left:144.00px;top:599.04px;font-size:12px;color:#111;font-weight:normal;transform:scaleX(1.0372);transform-origin:0 0;">gezahlte Vorsteuerbeträge</div>
<div class="t" style="left:722.41px;top:599.72px;font-size:11.2px;color:#111;font-weight:normal;letter-spacing:-0.1px;">6.942,62 €</div>
<div class="t" style="left:126.75px;top:615.72px;font-size:11.2px;color:#111;font-weight:normal;letter-spacing:-0.1px;">50</div>
<div class="t" style="left:144.00px;top:615.04px;font-size:12px;color:#111;font-weight:normal;transform:scaleX(1.0087);transform-origin:0 0;">An das Finanzamt gezahlte und ggf. verrechnete Umsatzsteuer</div>
<div class="t" style="left:722.41px;top:615.72px;font-size:11.2px;color:#111;font-weight:normal;letter-spacing:-0.1px;">8.945,30 €</div>
<div class="t" style="left:126.75px;top:631.72px;font-size:11.2px;color:#111;font-weight:normal;letter-spacing:-0.1px;">52</div>
<div class="t" style="left:144.00px;top:631.04px;font-size:12px;color:#111;font-weight:normal;transform:scaleX(1.0325);transform-origin:0 0;">übrige, unbeschränkt abziehbare Betriebsausgaben</div>
<div class="t" style="left:737.67px;top:631.72px;font-size:11.2px;color:#111;font-weight:normal;letter-spacing:-0.1px;">32,00 €</div>
<div class="t" style="left:126.75px;top:647.72px;font-size:11.2px;color:#111;font-weight:normal;letter-spacing:-0.1px;">53</div>
<div class="t" style="left:144.00px;top:647.04px;font-size:12px;color:#111;font-weight:normal;transform:scaleX(1.0065);transform-origin:0 0;">Geschenke</div>
<div class="t" style="left:749.00px;top:646.72px;font-size:11.2px;color:#111;font-weight:normal;">-</div>
<div class="t" style="left:768.07px;top:647.72px;font-size:11.2px;color:#111;font-weight:normal;">€</div>
<div class="t" style="left:126.75px;top:663.72px;font-size:11.2px;color:#111;font-weight:normal;letter-spacing:-0.1px;">54</div>
<div class="t" style="left:144.00px;top:663.04px;font-size:12px;color:#111;font-weight:normal;transform:scaleX(1.0427);transform-origin:0 0;">Bewirtungsaufwendungen</div>
<div class="t" style="left:737.67px;top:663.72px;font-size:11.2px;color:#111;font-weight:normal;letter-spacing:-0.1px;">38,50 €</div>
<div class="t" style="left:610.00px;top:679.04px;font-size:12px;color:#111;font-weight:normal;transform:scaleX(1.0660);transform-origin:0 0;">abziehbar</div>
<div class="t" style="left:818.67px;top:679.72px;font-size:11.2px;color:#111;font-weight:normal;letter-spacing:-0.1px;">38,50 €</div>
<div class="t" style="left:610.00px;top:695.04px;font-size:12px;color:#111;font-weight:normal;transform:scaleX(1.0615);transform-origin:0 0;">nicht abziehbar</div>
<div class="t" style="left:818.67px;top:695.72px;font-size:11.2px;color:#111;font-weight:normal;letter-spacing:-0.1px;">16,50 €</div>
<div class="t" style="left:126.75px;top:711.72px;font-size:11.2px;color:#111;font-weight:normal;letter-spacing:-0.1px;">55</div>
<div class="t" style="left:144.00px;top:711.04px;font-size:12px;color:#111;font-weight:normal;transform:scaleX(1.0372);transform-origin:0 0;">Verpflegungsmehraufwendungen</div>
<div class="t" style="left:737.67px;top:711.72px;font-size:11.2px;color:#111;font-weight:normal;letter-spacing:-0.1px;">93,60 €</div>
<div class="t" style="left:126.75px;top:727.72px;font-size:11.2px;color:#111;font-weight:normal;letter-spacing:-0.1px;">56</div>
<div class="t" style="left:144.00px;top:727.04px;font-size:12px;color:#111;font-weight:normal;transform:scaleX(1.0432);transform-origin:0 0;">Aufwendungen für ein häusliches Arbeitszimmer</div>
<div class="t" style="left:731.54px;top:727.72px;font-size:11.2px;color:#111;font-weight:normal;letter-spacing:-0.1px;">225,00 €</div>
<div class="t" style="left:126.75px;top:743.72px;font-size:11.2px;color:#111;font-weight:normal;letter-spacing:-0.1px;">59</div>
<div class="t" style="left:144.00px;top:743.04px;font-size:12px;color:#111;font-weight:normal;transform:scaleX(0.9960);transform-origin:0 0;">Kfz: Leasingkosten</div>
<div class="t" style="left:749.00px;top:742.72px;font-size:11.2px;color:#111;font-weight:normal;">-</div>
<div class="t" style="left:768.07px;top:743.72px;font-size:11.2px;color:#111;font-weight:normal;">€</div>
<div class="t" style="left:126.75px;top:759.72px;font-size:11.2px;color:#111;font-weight:normal;letter-spacing:-0.1px;">60</div>
<div class="t" style="left:144.00px;top:759.04px;font-size:12px;color:#111;font-weight:normal;transform:scaleX(0.9949);transform-origin:0 0;">Kfz: Steuern, Versicherung, Maut</div>
<div class="t" style="left:722.41px;top:759.72px;font-size:11.2px;color:#111;font-weight:normal;letter-spacing:-0.1px;">1.100,00 €</div>
<div class="t" style="left:126.75px;top:775.72px;font-size:11.2px;color:#111;font-weight:normal;letter-spacing:-0.1px;">61</div>
<div class="t" style="left:144.00px;top:775.04px;font-size:12px;color:#111;font-weight:normal;letter-spacing:0.24px;">Sonstige tatsächliche Fahrtkosten</div>
<div class="t" style="left:731.54px;top:775.72px;font-size:11.2px;color:#111;font-weight:normal;letter-spacing:-0.1px;">600,00 €</div>
<svg style="left:0;top:0" width="200" height="200"><path d="M135.5 147 H140.5 V152 Z" fill="#e00000"/></svg>
<div class="a" style="left:32px;top:144px;width:111px;height:37px;background:transparent;border:2px solid #217346"></div>
<div class="a" style="left:139px;top:177px;width:5px;height:5px;background:#217346;"></div>
<div class="a" style="left:139px;top:179px;width:5px;height:1px;background:#9fc7ad;"></div>
<div class="a" style="left:1272px;top:145px;width:1px;height:634px;background:#a9a9a9;"></div>
<div class="a" style="left:1273px;top:126px;width:20px;height:654px;background:#e6e6e6;"></div>
<div class="a" style="left:1276px;top:143px;width:15px;height:636px;background:#d9d9d9;"></div>
<div class="a" style="left:1276px;top:128px;width:15px;height:15px;background:#f7f7f7;border:1px solid #b5b5b5"></div>
<svg style="left:0;top:0" width="1301" height="836"><path d="M1279.8 138 H1287.2 L1283.5 134.2 Z" fill="#6b6b6b"/><path d="M1279.8 771 H1287.2 L1283.5 774.8 Z" fill="#6b6b6b"/></svg>
<div class="a" style="left:1276px;top:143px;width:15px;height:276px;background:#f5f5f5;border:1px solid #a8a8a8"></div>
<div class="a" style="left:1276px;top:764px;width:15px;height:15px;background:#f7f7f7;border:1px solid #b5b5b5"></div>
<svg style="left:0;top:0" width="1301" height="836"><path d="M1279.8 771 H1287.2 L1283.5 774.8 Z" fill="#6b6b6b"/></svg>
<div class="a" style="left:8px;top:779px;width:1285px;height:28px;background:#e4e4e4;"></div>
<div class="a" style="left:8px;top:779px;width:1265px;height:1px;background:#9f9f9f;"></div>
<div class="a" style="left:8px;top:807px;width:1285px;height:1px;background:#c2c2c2;"></div>
<svg style="left:0;top:0" width="1301" height="836"><path d="M39.2 789 V796.5 L35 792.75 Z" fill="#1d6b3d"/><path d="M64.2 789 V796.5 L68.4 792.75 Z" fill="#bdbdbd"/><rect x="89" y="795" width="2.4" height="2.4" fill="#1d4d30"/><rect x="93.2" y="795" width="2.4" height="2.4" fill="#1d4d30"/><rect x="97.4" y="795" width="2.4" height="2.4" fill="#1d4d30"/></svg>
<div class="a" style="left:111px;top:782px;width:69px;height:22px;background:#f5f500;"></div>
<div class="t" style="left:122.10px;top:786.20px;font-size:13px;color:#1a1a1a;font-weight:normal;transform:scaleX(0.8985);transform-origin:0 0;">ESt.Zahl</div>
<div class="a" style="left:108px;top:783px;width:1px;height:20px;background:#9a9a9a;"></div>
<div class="a" style="left:185px;top:782px;width:122px;height:22px;background:#f5f500;"></div>
<div class="t" style="left:199.60px;top:786.20px;font-size:13px;color:#1a1a1a;font-weight:normal;transform:scaleX(0.9310);transform-origin:0 0;">Sonst.Leist.Entn.</div>
<div class="a" style="left:182px;top:783px;width:1px;height:20px;background:#9a9a9a;"></div>
<div class="a" style="left:312px;top:782px;width:96px;height:22px;background:#f5f500;"></div>
<div class="t" style="left:323.30px;top:786.20px;font-size:13px;color:#1a1a1a;font-weight:normal;transform:scaleX(0.9965);transform-origin:0 0;">Kfz-Nutzung</div>
<div class="a" style="left:309px;top:783px;width:1px;height:20px;background:#9a9a9a;"></div>
<div class="a" style="left:413px;top:782px;width:109px;height:22px;background:#f5f500;"></div>
<div class="t" style="left:425.20px;top:786.20px;font-size:13px;color:#1a1a1a;font-weight:normal;transform:scaleX(1.0015);transform-origin:0 0;">Arbeitszimmer</div>
<div class="a" style="left:410px;top:783px;width:1px;height:20px;background:#9a9a9a;"></div>
<div class="a" style="left:527px;top:782px;width:67px;height:22px;background:#0070c0;"></div>
<div class="t" style="left:537.40px;top:786.20px;font-size:13px;color:#ffffff;font-weight:normal;transform:scaleX(1.0047);transform-origin:0 0;">pr.Ausg</div>
<div class="a" style="left:524px;top:783px;width:1px;height:20px;background:#9a9a9a;"></div>
<div class="a" style="left:599px;top:782px;width:93px;height:22px;background:#8fd04c;"></div>
<div class="t" style="left:610.40px;top:786.20px;font-size:13px;color:#1a1a1a;font-weight:normal;transform:scaleX(0.9730);transform-origin:0 0;">USt.Voranm</div>
<div class="a" style="left:596px;top:783px;width:1px;height:20px;background:#9a9a9a;"></div>
<div class="a" style="left:697px;top:782px;width:79px;height:22px;background:#8fd04c;"></div>
<div class="t" style="left:708.40px;top:786.20px;font-size:13px;color:#1a1a1a;font-weight:normal;transform:scaleX(0.9302);transform-origin:0 0;">USt.Erklär</div>
<div class="a" style="left:694px;top:783px;width:1px;height:20px;background:#9a9a9a;"></div>
<div class="a" style="left:781px;top:782px;width:49px;height:22px;background:#8fd04c;"></div>
<div class="t" style="left:791.50px;top:786.20px;font-size:13px;color:#1a1a1a;font-weight:normal;transform:scaleX(0.8922);transform-origin:0 0;">BWA</div>
<div class="a" style="left:778px;top:783px;width:1px;height:20px;background:#9a9a9a;"></div>
<div class="a" style="left:832px;top:779px;width:48px;height:25px;background:linear-gradient(#f5f5f5 30%,#d3e8c2 96%);border-left:1px solid #a9a9a9;border-right:1px solid #a9a9a9"></div>
<div class="a" style="left:833px;top:779px;width:46px;height:1px;background:#f4f4f4;"></div>
<div class="a" style="left:832px;top:802px;width:48px;height:2px;background:#217346;"></div>
<div class="t" style="left:844.30px;top:784.63px;font-size:14.5px;color:#1f6b40;font-weight:bold;transform:scaleX(0.7771);transform-origin:0 0;">EÜR</div>
<svg style="left:0;top:0" width="1301" height="836"><circle cx="921" cy="793" r="7.2" fill="none" stroke="#6f6f6f" stroke-width="1.3"/><path d="M917 793 H925 M921 789 V797" stroke="#6f6f6f" stroke-width="1.8"/><rect x="990.2" y="788.2" width="1.6" height="1.6" fill="#8f8f8f"/><rect x="990.2" y="792.2" width="1.6" height="1.6" fill="#8f8f8f"/><rect x="990.2" y="796.2" width="1.6" height="1.6" fill="#8f8f8f"/></svg>
<div class="a" style="left:1007px;top:786px;width:247px;height:15px;background:#d9d9d9;"></div>
<div class="a" style="left:1007px;top:786px;width:15px;height:15px;background:#f7f7f7;border:1px solid #b5b5b5"></div>
<div class="a" style="left:1022px;top:786px;width:210px;height:15px;background:#f5f5f5;border:1px solid #a8a8a8"></div>
<div class="a" style="left:1257px;top:786px;width:15px;height:15px;background:#f7f7f7;border:1px solid #b5b5b5"></div>
<div class="a" style="left:1254px;top:786px;width:3px;height:15px;background:#e4e4e4;"></div>
<svg style="left:0;top:0" width="1301" height="836"><path d="M1016.5 789.5 V797 L1012.7 793.25 Z" fill="#6b6b6b"/><path d="M1262.5 789.5 V797 L1266.3 793.25 Z" fill="#6b6b6b"/></svg>
<div class="a" style="left:8px;top:808px;width:1285px;height:20px;background:#efefef;"></div>
<div class="t" style="left:15.80px;top:811.94px;font-size:12px;color:#444;font-weight:normal;transform:scaleX(0.9311);transform-origin:0 0;">Bereit</div>
<div class="a" style="left:994px;top:808px;width:38px;height:20px;background:#c6c6c6;"></div>
<svg style="left:0;top:0" width="1301" height="836"><g fill="none" stroke="#707070"><rect x="1006.6" y="811.6" width="11.8" height="11.8" stroke-width="1.2"/><path d="M1010.6 811.6 V823.4 M1014.5 811.6 V823.4 M1006.6 815.6 H1018.4 M1006.6 819.5 H1018.4" stroke-width="1.2"/><rect x="1044.8" y="811.7" width="12.4" height="12.2" stroke-width="1.3"/><rect x="1047.5" y="813.5" width="7" height="8" stroke-width="1"/><path d="M1049 815.6 H1053 M1049 817.6 H1053 M1049 819.6 H1053" stroke-width="0.9"/><rect x="1082.6" y="811.7" width="12.6" height="12.2" stroke-width="1.3"/><path d="M1082.6 818.4 H1089.3 V811.7 M1086.4 811.7 V818.4" stroke-width="1.2"/><path d="M1123 817.7 H1223" stroke="#9d9d9d" stroke-width="1"/></g><rect x="1112.8" y="817" width="6" height="2.2" fill="#555"/><rect x="1170.8" y="812" width="4" height="10.5" fill="#555"/><path d="M1226.7 818.2 H1233.6 M1230.15 814.4 V822" stroke="#555" stroke-width="2"/></svg>
<div class="t" style="left:1244.80px;top:812.04px;font-size:12px;color:#333;font-weight:normal;transform:scaleX(0.8463);transform-origin:0 0;">100 %</div></body></html>
